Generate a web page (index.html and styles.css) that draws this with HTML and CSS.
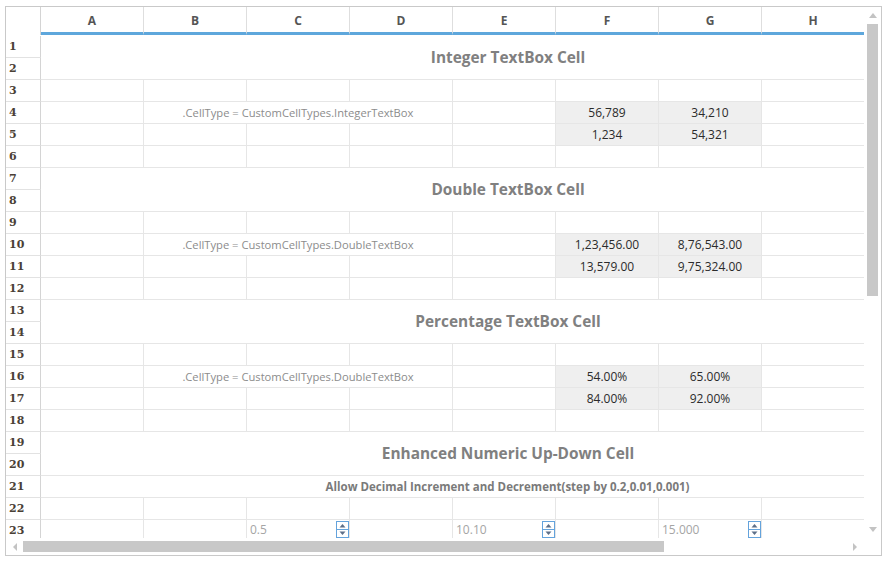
FILE: index.html
```html
<!DOCTYPE html>
<html>
<head>
<meta charset="utf-8">
<link rel="stylesheet" href="styles.css">
</head>
<body>
<div class="sheet">
  <div class="top">
    <div class="viewport">
      <div class="colhead">
        <div class="corner"></div>
        <div class="ch">A</div><div class="ch">B</div><div class="ch">C</div><div class="ch">D</div>
        <div class="ch">E</div><div class="ch">F</div><div class="ch">G</div><div class="ch">H</div><div class="ch"></div>
      </div>
      <div class="grid">
        <div class="rh">1</div><div class="title">Integer TextBox Cell</div>
        <div class="rh">2</div>
        <div class="rh">3</div><div class="c"></div><div class="c"></div><div class="c"></div><div class="c"></div><div class="c"></div><div class="c"></div><div class="c"></div><div class="c"></div><div class="c"></div>
        <div class="rh">4</div><div class="c"></div><div class="c note">.CellType = CustomCellTypes.IntegerTextBox</div><div class="c"></div><div class="c val">56,789</div><div class="c val">34,210</div><div class="c"></div><div class="c"></div>
        <div class="rh">5</div><div class="c"></div><div class="c"></div><div class="c"></div><div class="c"></div><div class="c"></div><div class="c val">1,234</div><div class="c val">54,321</div><div class="c"></div><div class="c"></div>
        <div class="rh">6</div><div class="c"></div><div class="c"></div><div class="c"></div><div class="c"></div><div class="c"></div><div class="c"></div><div class="c"></div><div class="c"></div><div class="c"></div>
        <div class="rh">7</div><div class="title">Double TextBox Cell</div>
        <div class="rh">8</div>
        <div class="rh">9</div><div class="c"></div><div class="c"></div><div class="c"></div><div class="c"></div><div class="c"></div><div class="c"></div><div class="c"></div><div class="c"></div><div class="c"></div>
        <div class="rh">10</div><div class="c"></div><div class="c note">.CellType = CustomCellTypes.DoubleTextBox</div><div class="c"></div><div class="c val">1,23,456.00</div><div class="c val">8,76,543.00</div><div class="c"></div><div class="c"></div>
        <div class="rh">11</div><div class="c"></div><div class="c"></div><div class="c"></div><div class="c"></div><div class="c"></div><div class="c val">13,579.00</div><div class="c val">9,75,324.00</div><div class="c"></div><div class="c"></div>
        <div class="rh">12</div><div class="c"></div><div class="c"></div><div class="c"></div><div class="c"></div><div class="c"></div><div class="c"></div><div class="c"></div><div class="c"></div><div class="c"></div>
        <div class="rh">13</div><div class="title">Percentage TextBox Cell</div>
        <div class="rh">14</div>
        <div class="rh">15</div><div class="c"></div><div class="c"></div><div class="c"></div><div class="c"></div><div class="c"></div><div class="c"></div><div class="c"></div><div class="c"></div><div class="c"></div>
        <div class="rh">16</div><div class="c"></div><div class="c note">.CellType = CustomCellTypes.DoubleTextBox</div><div class="c"></div><div class="c val">54.00%</div><div class="c val">65.00%</div><div class="c"></div><div class="c"></div>
        <div class="rh">17</div><div class="c"></div><div class="c"></div><div class="c"></div><div class="c"></div><div class="c"></div><div class="c val">84.00%</div><div class="c val">92.00%</div><div class="c"></div><div class="c"></div>
        <div class="rh">18</div><div class="c"></div><div class="c"></div><div class="c"></div><div class="c"></div><div class="c"></div><div class="c"></div><div class="c"></div><div class="c"></div><div class="c"></div>
        <div class="rh">19</div><div class="title">Enhanced Numeric Up-Down Cell</div>
        <div class="rh">20</div>
        <div class="rh">21</div><div class="c subtitle">Allow Decimal Increment and Decrement(step by 0.2,0.01,0.001)</div>
        <div class="rh">22</div><div class="c"></div><div class="c"></div><div class="c"></div><div class="c"></div><div class="c"></div><div class="c"></div><div class="c"></div><div class="c"></div><div class="c"></div>
        <div class="rh">23</div><div class="c"></div><div class="c"></div>
        <div class="c updown"><span>0.5</span><svg class="spin" width="13" height="17" viewBox="0 0 13 17"><rect x="0.5" y="0.5" width="12" height="16" fill="#fff" stroke="#64a3dc"/><line x1="1" y1="8.5" x2="12" y2="8.5" stroke="#64a3dc"/><path d="M3.5 6.5h6l-3-3.5z" fill="#5d6f88"/><path d="M3.5 10.5h6l-3 3.5z" fill="#5d6f88"/></svg></div>
        <div class="c"></div>
        <div class="c updown"><span>10.10</span><svg class="spin" width="13" height="17" viewBox="0 0 13 17"><rect x="0.5" y="0.5" width="12" height="16" fill="#fff" stroke="#64a3dc"/><line x1="1" y1="8.5" x2="12" y2="8.5" stroke="#64a3dc"/><path d="M3.5 6.5h6l-3-3.5z" fill="#5d6f88"/><path d="M3.5 10.5h6l-3 3.5z" fill="#5d6f88"/></svg></div>
        <div class="c"></div>
        <div class="c updown"><span>15.000</span><svg class="spin" width="13" height="17" viewBox="0 0 13 17"><rect x="0.5" y="0.5" width="12" height="16" fill="#fff" stroke="#64a3dc"/><line x1="1" y1="8.5" x2="12" y2="8.5" stroke="#64a3dc"/><path d="M3.5 6.5h6l-3-3.5z" fill="#5d6f88"/><path d="M3.5 10.5h6l-3 3.5z" fill="#5d6f88"/></svg></div>
        <div class="c"></div><div class="c"></div>
      </div>
    </div>
    <div class="vscroll">
      <div class="arrow up"></div>
      <div class="vtrack"><div class="vthumb"></div></div>
      <div class="arrow down"></div>
    </div>
  </div>
  <div class="bottom">
    <div class="hscroll">
      <div class="arrow left"></div>
      <div class="htrack"><div class="hthumb"></div></div>
      <div class="arrow right"></div>
    </div>
    <div class="scorner"></div>
  </div>
</div>
</body>
</html>
```
FILE: styles.css
```css
* { box-sizing: border-box; }
body {
  margin: 0;
  background: #fff;
  font-family: "Open Sans", "Noto Sans", sans-serif;
}
.sheet {
  margin: 6px 0 0 5px;
  width: 877px;
  height: 550px;
  border: 1px solid #c9c9c9;
  display: flex;
  flex-direction: column;
}
.top {
  display: flex;
  height: 531px;
}
.viewport {
  width: 858px;
  height: 531px;
  overflow: hidden;
}
.colhead {
  display: grid;
  grid-template-columns: 35px repeat(9, 103px);
  height: 28px;
  width: 962px;
}
.corner {
  border-right: 1px solid #d4d4d4;
}
.ch {
  border-right: 1px solid #dedede;
  border-bottom: 3px solid #5ea7dc;
  font-weight: 700;
  font-size: 12px;
  color: #555;
  display: flex;
  align-items: center;
  justify-content: center;
  padding-top: 1px;
}
.grid {
  display: grid;
  grid-template-columns: 35px repeat(9, 103px);
  grid-auto-rows: 22px;
  width: 962px;
  padding-top: 1px;
}
.rh {
  grid-column: 1;
  border-right: 1px solid #d4d4d4;
  border-bottom: 1px solid #e2e2e2;
  font-family: "DejaVu Serif", serif;
  font-weight: 700;
  font-size: 11px;
  color: #4a4036;
  padding-left: 3px;
  display: flex;
  align-items: center;
}
.c {
  border-right: 1px solid #e6e6e6;
  border-bottom: 1px solid #e6e6e6;
  font-size: 12px;
  display: flex;
  align-items: center;
  justify-content: center;
  white-space: nowrap;
}
.title {
  grid-column: span 9;
  grid-row: span 2;
  border-bottom: 1px solid #e6e6e6;
  font-weight: 700;
  font-size: 15.4px;
  color: #808080;
  display: flex;
  align-items: center;
  justify-content: center;
  padding-left: 7px;
}
.subtitle {
  grid-column: span 9;
  font-weight: 700;
  font-size: 11.5px;
  color: #7a7a7a;
  padding-left: 7px;
}
.note {
  grid-column: span 3;
  color: #8c8c8c;
  font-size: 11.2px;
}
.val {
  background: #efefef;
  border-color: #e6e6e6;
  color: #2b2b2b;
  font-size: 12px;
}
.updown {
  justify-content: space-between;
  align-items: flex-start;
  color: #a5a5a5;
  font-size: 12px;
  padding-left: 3px;
}
.updown span {
  line-height: 20px;
}
.spin {
  display: block;
  margin-top: 1px;
}
.vscroll {
  width: 17px;
  display: flex;
  flex-direction: column;
  align-items: center;
}
.vtrack {
  flex: 1;
  width: 17px;
  padding: 0 3px;
}
.vthumb {
  width: 11px;
  height: 272px;
  background: #c8c8c8;
}
.bottom {
  display: flex;
  height: 17px;
}
.hscroll {
  width: 858px;
  display: flex;
  align-items: center;
}
.htrack {
  flex: 1;
  height: 17px;
  padding-top: 3px;
}
.hthumb {
  width: 641px;
  height: 11px;
  background: #c8c8c8;
}
.scorner { width: 17px; }
.arrow {
  width: 0;
  height: 0;
  border-style: solid;
  border-color: transparent;
}
.up {
  margin: 6px 0 6px;
  border-width: 0 4px 5px;
  border-bottom-color: #c3c3c3;
}
.down {
  margin: 6px 0 6px;
  border-width: 5px 4px 0;
  border-top-color: #c3c3c3;
}
.left {
  margin: 0 6px 0 7px;
  border-width: 4px 4px 4px 0;
  border-right-color: #c3c3c3;
}
.right {
  margin: 0 7px 0 6px;
  border-width: 4px 0 4px 4px;
  border-left-color: #c3c3c3;
}
```
